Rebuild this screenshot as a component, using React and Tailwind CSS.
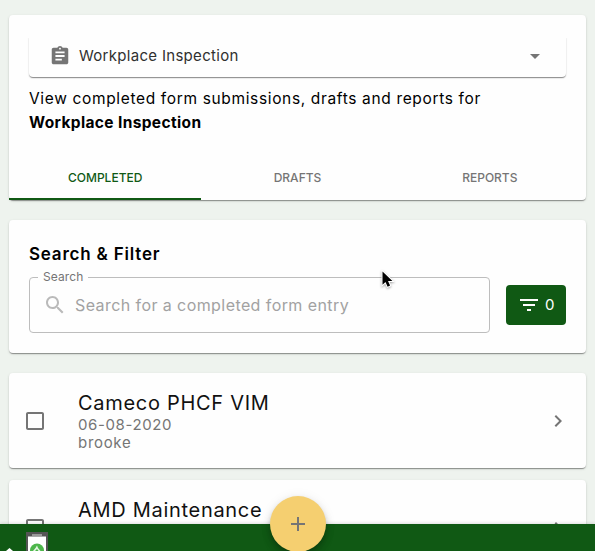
const cardShadow =
  'bg-[#fefefe] rounded shadow-[0_2px_1px_-1px_rgba(0,0,0,0.2),0_1px_1px_0_rgba(0,0,0,0.2),0_1px_3px_0_rgba(0,0,0,0.12)]';

function Icon({ d, className }) {
  return (
    <svg viewBox="0 0 24 24" fill="currentColor" className={className}>
      <path d={d} />
    </svg>
  );
}

function FormSelect() {
  return (
    <div className="flex h-10 items-center rounded-b pb-[2px] pl-5 pr-[19px] text-[#757575] shadow-[0_2px_1px_-1px_rgba(0,0,0,0.2),0_1px_1px_0_rgba(0,0,0,0.24),0_1px_2px_0_rgba(0,0,0,0.12)] [clip-path:inset(1px_-4px_-4px_-4px)]">
      <Icon
        className="size-[22px] shrink-0"
        d="M19 3h-4.18C14.4 1.84 13.3 1 12 1c-1.3 0-2.4.84-2.82 2H5c-1.1 0-2 .9-2 2v14c0 1.1.9 2 2 2h14c1.1 0 2-.9 2-2V5c0-1.100-.9-2-2-2zm-7 0c.55 0 1 .45 1 1s-.45 1-1 1-1-.45-1-1 .45-1 1-1zm2 14H7v-2h7v2zm3-4H7v-2h10v2zm0-4H7V7h10v2z"
      />
      <span className="ml-2 flex-1 whitespace-nowrap text-[15px] tracking-[0.3px] text-[#303030]">Workplace Inspection</span>
      <Icon className="size-6 shrink-0" d="M7 10l5 5 5-5z" />
    </div>
  );
}

function Tabs() {
  return (
    <div className="mt-[19px] grid h-[46px] grid-cols-3 grid-rows-[46px] text-center text-[12px] font-medium text-[#757575]">
      <div className="border-b-2 border-[#105914] pt-[15px] leading-[18px] text-[#105914]">COMPLETED</div>
      <div className="pt-[15px] leading-[18px]">DRAFTS</div>
      <div className="pt-[15px] leading-[18px]">REPORTS</div>
    </div>
  );
}

function Entry({ title, date, author }) {
  return (
    <div className={`${cardShadow} flex h-[95px] shrink-0 items-center pl-[14px] pr-4`}>
      <Icon
        className="size-6 shrink-0 text-[#757575]"
        d="M19 5v14H5V5h14m0-2H5c-1.100 0-2 .9-2 2v14c0 1.100.9 2 2 2h14c1.100 0 2-.9 2-2V5c0-1.100-.9-2-2-2z"
      />
      <div className="ml-[31px] h-[60px] flex-1 whitespace-nowrap text-[#757575]">
        <div className="text-[20px] leading-6 tracking-[0.7px] text-[#111]">{title}</div>
        {date && <div className="mt-px text-[15px] leading-[18px] tracking-[0.6px]">{date}</div>}
        {author && <div className="text-[15px] leading-[18px] tracking-[0.7px]">{author}</div>}
      </div>
      <Icon className="size-6 shrink-0 text-[#757575]" d="M10 6L8.590 7.410 13.170 12l-4.580 4.590L10 18l6-6z" />
    </div>
  );
}

export default function App() {
  return (
    <div className="relative h-[551px] w-full overflow-hidden bg-[#eef3ee] font-[Inter,'Work_Sans',sans-serif] text-black">
      <main className="flex h-full flex-col overflow-hidden px-[9px] pt-[15px]">
        <section className={`${cardShadow} h-[185px] shrink-0`}>
          <div className="px-5 pt-[22px]">
            <FormSelect />
            <p className="mt-[10px] whitespace-nowrap text-[15.5px] leading-6 tracking-[0.65px]">
              View completed form submissions, drafts and reports for
              <br />
              <b className="font-bold tracking-[0.36px]">Workplace Inspection</b>
            </p>
          </div>
          <Tabs />
        </section>

        <section className={`${cardShadow} mt-5 h-[133px] shrink-0 px-5 pt-[22px]`}>
          <h2 className="text-[17px] font-semibold leading-6 tracking-[0.8px]">Search &amp; Filter</h2>
          <div className="mt-px flex items-end">
            <fieldset className="h-[66px] w-[461px] rounded border border-[#bdbdbd] px-2 pb-0">
              <legend className="px-[5px] text-[12px] leading-[20px] tracking-[0.1px] text-[#757575]">Search</legend>
              <div className="flex h-[36px] items-center">
                <Icon
                  className="ml-[5px] size-6 text-[#bababa]"
                  d="M15.500 14h-.79l-.28-.27C15.410 12.590 16 11.110 16 9.500 16 5.910 13.090 3 9.500 3S3 5.910 3 9.500 5.910 16 9.500 16c1.610 0 3.090-.59 4.230-1.570l.27.28v.79l5 4.990L20.490 19l-4.990-5zm-6 0C7.010 14 5 11.990 5 9.500S7.010 5 9.500 5 14 7.010 14 9.500 11.990 14 9.500 14z"
                />
                <span className="ml-2 text-[16px] tracking-[0.42px] text-[#a2a2a2]">Search for a completed form entry</span>
              </div>
            </fieldset>
            <button className="mb-2 ml-4 flex h-10 w-[60px] items-center rounded bg-[#105914] pl-[11px] text-white">
              <Icon className="size-6" d="M10 18h4v-2h-4v2zM3 6v2h18V6H3zm3 7h12v-2H6v2z" />
              <span className="ml-[4px] text-[15px]">0</span>
            </button>
          </div>
        </section>

        <div className="mt-5 flex flex-col gap-3">
          <Entry title="Cameco PHCF VIM" date="06-08-2020" author="brooke" />
          <Entry title="AMD Maintenance" />
        </div>
      </main>

      <footer className="absolute inset-x-0 bottom-0 h-[27px] overflow-hidden bg-[#105914] shadow-[0_-1px_3px_rgba(0,0,0,0.12)]">
        <svg width="60" height="27" viewBox="0 0 60 27">
          <path d="M6 27l3.500-3L13 27z" fill="#fff" />
          <path d="M26 8h22v19H26z" fill="#555" />
          <path d="M28 12.500h18V27H28z" fill="#fff" />
          <path d="M32 10h10v2H32z" fill="#999" />
          <circle cx="37" cy="26.500" r="7" fill="#4db64b" />
          <path d="M37 21.500l1 2.500 2.500 3h-2l-1.500-2-2 2h-2l2.500-3z" fill="#e5f5e4" />
        </svg>
      </footer>

      <button className="absolute left-[270px] top-[496px] flex size-14 items-center justify-center rounded-full bg-[#f5cf70] text-[#757575] shadow-[0_3px_5px_-1px_rgba(0,0,0,0.2),0_6px_10px_0_rgba(0,0,0,0.14),0_1px_12px_0_rgba(0,0,0,0.08)]">
        <Icon className="size-6" d="M19 13h-6v6h-2v-6H5v-2h6V5h2v6h6v2z" />
      </button>

      <svg
        width="14"
        height="20"
        viewBox="0 0 14 20"
        className="absolute left-[381px] top-[270px] drop-shadow-[0_1px_1px_rgba(0,0,0,0.35)]"
      >
        <path
          d="M1.500 1.500v13.200l3-2.800 2.100 4.800 2.500-1.100-2.100-4.600h4.400z"
          fill="#000"
          stroke="#fff"
          strokeWidth="2"
          paintOrder="stroke"
        />
      </svg>
    </div>
  );
}
